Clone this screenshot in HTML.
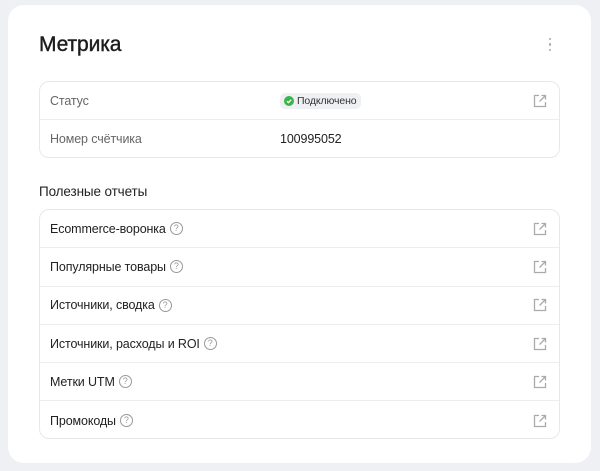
<!DOCTYPE html>
<html><head><meta charset="utf-8"><style>
*{box-sizing:border-box;margin:0;padding:0}
body{width:600px;height:471px;background:#eef0f4;font-family:"Liberation Sans",sans-serif;color:#222;position:relative;overflow:hidden}
.card{position:absolute;left:8px;top:5px;width:583px;height:458px;background:#fff;border-radius:16px}
h1{position:absolute;left:31px;top:28px;font-size:21px;font-weight:normal;color:#1c1c1c;letter-spacing:-0.1px;-webkit-text-stroke:0.4px #1c1c1c}
.kebab{position:absolute;left:541px;top:33px;width:4px}
.kebab i{display:block;width:2.4px;height:2.4px;background:#aaa;border-radius:50%;margin:0 0 3px 0}
.box{position:absolute;left:31px;width:521px;border:1px solid #e6e8ec;border-radius:10px}
.row{position:relative;border-bottom:1px solid #ebedf0;font-size:12.5px;display:flex;align-items:center;padding-left:10px;letter-spacing:-0.12px}
.row:last-child{border-bottom:none}
.lbl{color:#666}
.val{position:absolute;left:240px}
.ext{position:absolute;right:12px;top:50%;margin-top:-7px}
.badge{display:inline-flex;align-items:center;background:#eef0f3;border-radius:5px;padding:2px 4px;font-size:10.5px;color:#333}
.dot{width:10px;height:10px;border-radius:50%;background:#3bb54a;margin-right:3px;position:relative}
.q{display:inline-block;width:13px;height:13px;border:1px solid #999;border-radius:50%;font-size:9px;color:#999;text-align:center;line-height:11px;margin-left:4px;letter-spacing:0}
.sec{position:absolute;left:31px;top:179px;font-size:13.5px;color:#222;letter-spacing:-0.12px}
</style></head><body>
<div class="card">
<h1>Метрика</h1>
<div class="kebab"><i></i><i></i><i></i></div>
<div class="box" style="top:76px;height:77px">
<div class="row" style="height:38px"><span class="lbl">Статус</span><span class="val"><span class="badge"><span class="dot"><svg width="10" height="10" viewBox="0 0 10 10"><path d="M3 5.2l1.4 1.4L7.2 3.8" stroke="#fff" stroke-width="1.3" fill="none"/></svg></span>Подключено</span></span>
<svg class="ext" width="14" height="14" viewBox="0 0 14 14" fill="none" stroke="#aaa" stroke-width="1.3"><path d="M6 1.5H1.5v11h11V8M8.5 1.5h4v4M12.5 1.5L6.5 7.5"/></svg></div>
<div class="row" style="height:37px"><span class="lbl">Номер счётчика</span><span class="val" style="color:#222">100995052</span></div>
</div>
<div class="sec">Полезные отчеты</div>
<div class="box" style="top:204px;height:230px">
<div class="row" style="height:38.3px">Ecommerce-воронка<span class="q">?</span><svg class="ext" width="14" height="14" viewBox="0 0 14 14" fill="none" stroke="#aaa" stroke-width="1.3"><path d="M6 1.5H1.5v11h11V8M8.5 1.5h4v4M12.5 1.5L6.5 7.5"/></svg></div>
<div class="row" style="height:38.3px">Популярные товары<span class="q">?</span><svg class="ext" width="14" height="14" viewBox="0 0 14 14" fill="none" stroke="#aaa" stroke-width="1.3"><path d="M6 1.5H1.5v11h11V8M8.5 1.5h4v4M12.5 1.5L6.5 7.5"/></svg></div>
<div class="row" style="height:38.3px">Источники, сводка<span class="q">?</span><svg class="ext" width="14" height="14" viewBox="0 0 14 14" fill="none" stroke="#aaa" stroke-width="1.3"><path d="M6 1.5H1.5v11h11V8M8.5 1.5h4v4M12.5 1.5L6.5 7.5"/></svg></div>
<div class="row" style="height:38.3px">Источники, расходы и ROI<span class="q">?</span><svg class="ext" width="14" height="14" viewBox="0 0 14 14" fill="none" stroke="#aaa" stroke-width="1.3"><path d="M6 1.5H1.5v11h11V8M8.5 1.5h4v4M12.5 1.5L6.5 7.5"/></svg></div>
<div class="row" style="height:38.3px">Метки UTM<span class="q">?</span><svg class="ext" width="14" height="14" viewBox="0 0 14 14" fill="none" stroke="#aaa" stroke-width="1.3"><path d="M6 1.5H1.5v11h11V8M8.5 1.5h4v4M12.5 1.5L6.5 7.5"/></svg></div>
<div class="row" style="height:38.3px">Промокоды<span class="q">?</span><svg class="ext" width="14" height="14" viewBox="0 0 14 14" fill="none" stroke="#aaa" stroke-width="1.3"><path d="M6 1.5H1.5v11h11V8M8.5 1.5h4v4M12.5 1.5L6.5 7.5"/></svg></div>
</div>
</div>
</body></html>
